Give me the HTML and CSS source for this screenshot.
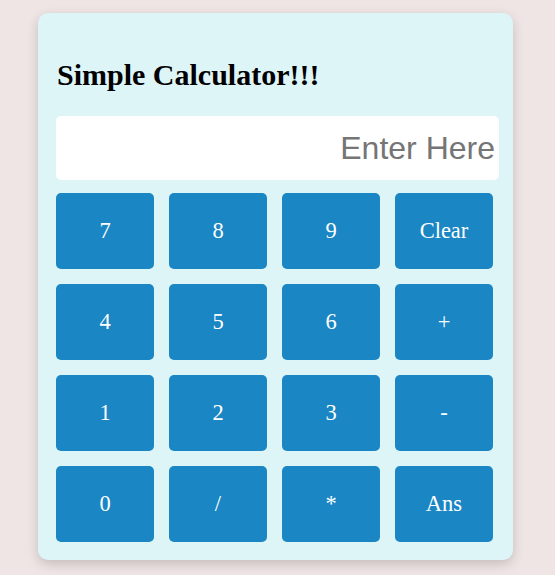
FILE: index.html
```html
<!DOCTYPE html>
<html lang="en">
<head>
<meta charset="utf-8">
<title>Simple Calculator</title>
<link rel="stylesheet" href="styles.css">
</head>
<body>
<div class="calc">
  <h2 class="title">Simple Calculator!!!</h2>
  <input class="display" type="text" placeholder="Enter Here">
  <div class="keys">
    <button class="key">7</button>
    <button class="key">8</button>
    <button class="key">9</button>
    <button class="key">Clear</button>
    <button class="key">4</button>
    <button class="key">5</button>
    <button class="key">6</button>
    <button class="key">+</button>
    <button class="key">1</button>
    <button class="key">2</button>
    <button class="key">3</button>
    <button class="key">-</button>
    <button class="key">0</button>
    <button class="key">/</button>
    <button class="key">*</button>
    <button class="key">Ans</button>
  </div>
</div>
</body>
</html>
```
FILE: styles.css
```css
html, body {
  margin: 0;
  padding: 0;
}
body {
  background: #efe5e5;
  font-family: "Liberation Serif", "Times New Roman", serif;
  padding: 13px 0 0 38px;
  height: 575px;
  box-sizing: border-box;
}
.calc {
  width: 475px;
  height: 547px;
  box-sizing: border-box;
  background: #def5f8;
  border-radius: 10px;
  padding: 18px 20px 18px 18px;
  box-shadow: 0 4px 12px rgba(0, 0, 0, 0.18);
}
.title {
  margin: 27px 0 24px 1px;
  font-size: 30px;
  line-height: 34px;
  font-weight: bold;
  color: #000;
}
.display {
  display: block;
  width: 443px;
  height: 64px;
  box-sizing: border-box;
  border: none;
  outline: none;
  border-radius: 5px;
  background: #fff;
  padding: 0 4px 0 4px;
  margin: 0 0 13px 0;
  font-family: "Liberation Sans", Arial, sans-serif;
  font-size: 32px;
  text-align: right;
  color: #333;
}
.display::placeholder {
  color: #757575;
}
.keys {
  display: grid;
  grid-template-columns: repeat(4, 98px);
  grid-auto-rows: 76px;
  gap: 15px;
}
.key {
  border: none;
  border-radius: 5px;
  background: #1a86c3;
  color: #fff;
  font-family: "Liberation Serif", "Times New Roman", serif;
  font-size: 22.5px;
  padding: 0;
  cursor: pointer;
}
```
